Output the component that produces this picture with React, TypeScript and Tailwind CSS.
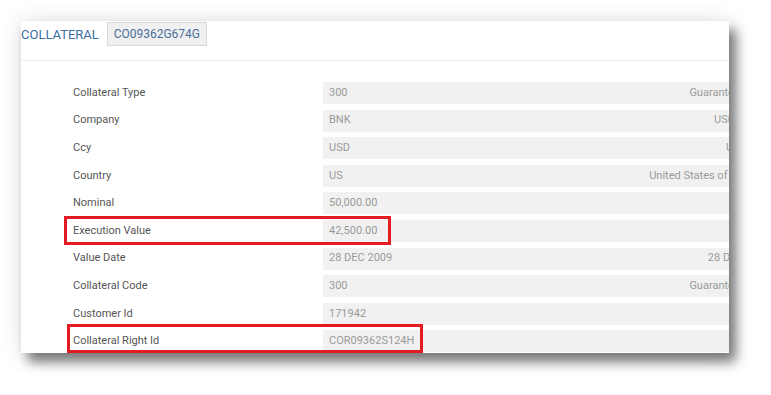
import React from 'react';

type Row = { label: string; value: string; extra?: string };

const rows: Row[] = [
  { label: 'Collateral Type', value: '300', extra: 'Guarantee Letter' },
  { label: 'Company', value: 'BNK', extra: 'US0010001' },
  { label: 'Ccy', value: 'USD', extra: 'US Dollar' },
  { label: 'Country', value: 'US', extra: 'United States of America' },
  { label: 'Nominal', value: '50,000.00' },
  { label: 'Execution Value', value: '42,500.00' },
  { label: 'Value Date', value: '28 DEC 2009', extra: '28 DEC 2009' },
  { label: 'Collateral Code', value: '300', extra: 'Guarantee Letter' },
  { label: 'Customer Id', value: '171942' },
  { label: 'Collateral Right Id', value: 'COR09362S124H' },
];

export default function App() {
  return (
    <div
      className="relative w-[771px] h-[395px] bg-white overflow-hidden pl-[21px] pt-[21px]"
      style={{ fontFamily: 'Roboto, "Liberation Sans", sans-serif' }}
    >
      <div className="w-[708px] h-[332px] bg-white overflow-hidden shadow-[7px_9px_11px_rgba(0,0,0,0.5),0_0_22px_rgba(0,0,0,0.12)]">
        <div className="h-[40px] border-b border-[#ececec] pt-[1px]">
          <div className="flex items-center h-[24px] gap-[8px]">
            <span className="text-[13px] text-[#3b6ea3] leading-none">
              COLLATERAL
            </span>
            <span className="h-[24px] w-[100px] flex items-center justify-center bg-[#f0f0f0] border border-[#d9d9d9] text-[12px] text-[#4a6f9a]">
              CO09362G674G
            </span>
          </div>
        </div>
        <div className="flex flex-col gap-y-[5.6px] pt-[21px] pl-[52px]">
          {rows.map((r) => (
            <div key={r.label} className="flex items-center h-[22px]">
              <div className="w-[250px] shrink-0 text-[11px] text-[#555]">
                {r.label}
              </div>
              <div className="w-[454px] shrink-0 h-[22px] bg-[#f1f1f1] flex items-center justify-between px-[6px] text-[11px] text-[#9a9a9a]">
                <span>{r.value}</span>
                <span className="whitespace-nowrap">{r.extra}</span>
              </div>
            </div>
          ))}
        </div>
      </div>
      <div className="absolute left-[64px] top-[216px] w-[327px] h-[29px] border-[3px] border-[#e31b23]" />
      <div className="absolute left-[67px] top-[324px] w-[356px] h-[29px] border-[3px] border-[#e31b23]" />
    </div>
  );
}
